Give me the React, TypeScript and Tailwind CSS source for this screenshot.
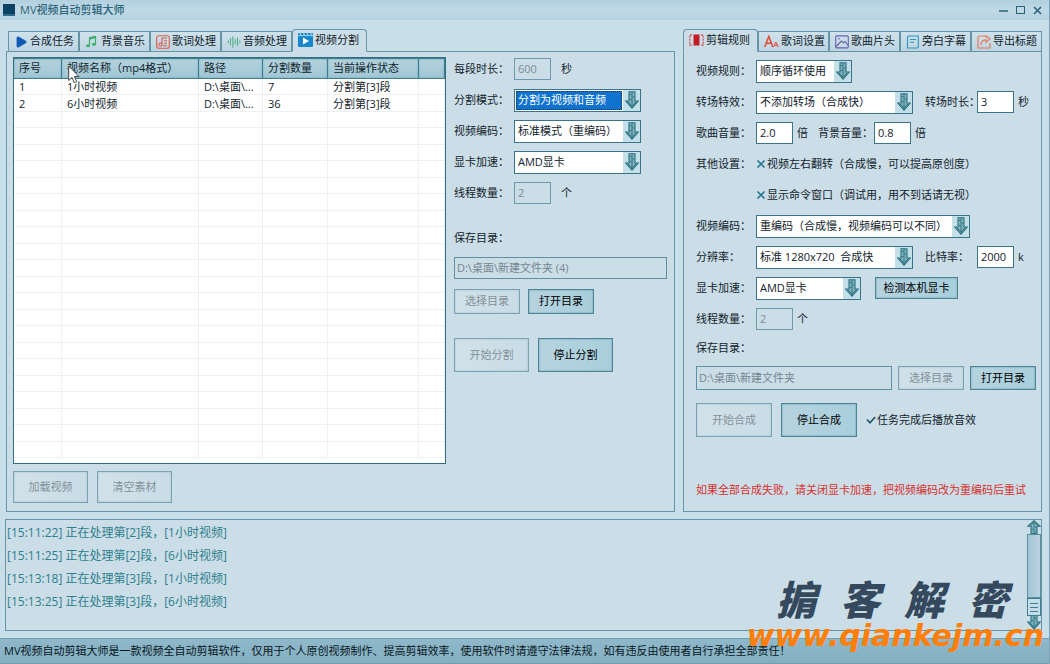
import React from 'react'
import { useState } from 'react'
import { AudioLines, Play } from 'lucide-react'
import clsx from 'clsx'


const tasks = [
    { id: 1, name: '1小时视频', path: 'D:\\桌面\\...', count: 7, status: '分割第[3]段' },
    { id: 2, name: '6小时视频', path: 'D:\\桌面\\...', count: 36, status: '分割第[3]段' },
]

const logs = [
    '[15:11:22] 正在处理第[2]段，[1小时视频]',
    '[15:11:25] 正在处理第[2]段，[6小时视频]',
    '[15:13:18] 正在处理第[3]段，[1小时视频]',
    '[15:13:25] 正在处理第[3]段，[6小时视频]',
]

const columns = ['序号', '视频名称（mp4格式）', '路径', '分割数量', '当前操作状态', '']

const ROWS = 23

/* ---------- icons ---------- */

const NoteIcon = () => (
    <svg viewBox="0 0 14 14" className="size-[14px] shrink-0">
        <path d="M4.500 10.500V2.800L10.500 1.500V9" fill="none" stroke="#3fae6b" strokeWidth="1.200" />
        <path d="M4.500 2.500L10.500 1V3.200L4.500 4.700z" fill="#3fae6b" />
        <ellipse cx="3" cy="10.800" rx="1.900" ry="1.500" fill="#3fae6b" />
        <ellipse cx="9" cy="9.300" rx="1.900" ry="1.500" fill="#3fae6b" />
    </svg>
)

const LyricIcon = () => (
    <svg viewBox="0 0 14 14" className="size-[14px] shrink-0" fill="none" stroke="#dd5b4a" strokeWidth="1.1">
        <rect x="0.7" y="0.7" width="12.6" height="12.6" rx="2" />
        <path d="M6 9.5V3h5M8.3 5.8h2.7M8 8.3h3M7 10.8h4" />
        <circle cx="4.4" cy="9.6" r="1.6" />
    </svg>
)

const VideoIcon = () => (
    <svg viewBox="0 0 15 14" className="h-[14px] w-[15px] shrink-0">
        <rect width="15" height="14" rx="1" fill="#1687cd" />
        <path d="M0 2.6h15" stroke="#c4e4f4" strokeWidth="0.8" />
        <path d="M2 0l1 2M5.500 0l1 2M9 0l1 2M12.500 0l1 2" stroke="#c4e4f4" strokeWidth="1" />
        <path d="M5 4.500v7l6-3.500z" fill="#fff" />
    </svg>
)

const RuleIcon = () => (
    <svg viewBox="0 0 15 12" className="h-3 w-[15px] shrink-0">
        <rect x="4.500" y="0.500" width="6" height="11" fill="#c11d28" />
        <path d="M3 1H0.800V11H3M12 1h2.200V11H12" fill="none" stroke="#d0555c" strokeWidth="1.300" strokeDasharray="2 1" />
    </svg>
)

const FontIcon = () => (
    <svg viewBox="0 0 15 13" className="h-[13px] w-[15px] shrink-0" fill="none" stroke="#df4a37">
        <path d="M0.800 12L4.800 1.300L8.800 12M2.300 8.300h5" strokeWidth="1.500" />
        <path d="M9.500 12L11.800 7L14.300 12M10.500 10.300h2.600" strokeWidth="1" />
    </svg>
)

const PictureIcon = () => (
    <svg viewBox="0 0 14 14" className="size-[14px] shrink-0" fill="none" stroke="#6a62ae" strokeWidth="1.100">
        <rect x="0.700" y="0.900" width="12.600" height="12" rx="1" />
        <path d="M1 11.500L6.500 6L8.500 7.800L10.200 6.500L13 10.500" />
        <path d="M3 3.800h2" />
    </svg>
)

const SubtitleIcon = () => (
    <svg viewBox="0 0 14 14" className="size-[14px] shrink-0" fill="none" stroke="#2f95bd" strokeWidth="1.100">
        <path d="M2.500 1H12.300V11.500A1.500 1.500 0 0 1 10.800 13H1.500V2A1 1 0 0 1 2.500 1z" />
        <path d="M4 4.500h6M4 7.200h4" />
    </svg>
)

const ExportIcon = () => (
    <svg viewBox="0 0 14 14" className="size-[14px] shrink-0" fill="none" stroke="#e8795a" strokeWidth="1.200">
        <path d="M8 1H2.500A1.500 1.500 0 0 0 1 2.500V13H13V8" />
        <path d="M4 10C4 6.500 6 4.800 9 4.800V7.300L13 3.800L9 0.800V3" />
    </svg>
)

const ArrowIcon = ({ up = false }: { up?: boolean }) => (
    <svg viewBox="0 0 14 18" className={clsx('w-[14px]', up ? 'h-[14px] rotate-180' : 'h-[18px]')} preserveAspectRatio="none">
        <path d="M4 0.700H10V10H13.200L7 17.200L0.800 10H4z" fill="#7fb2bd" stroke="#2d7180" strokeWidth="1.100" />
        <path d="M7 1V16M4.500 3.500h2M7.500 6h2M4.500 8.500h2M3 11l4 4 4-4" fill="none" stroke="#2d7180" strokeWidth="0.900" />
    </svg>
)

/* ---------- controls ---------- */

type TabItem = { label: string; icon: React.ReactNode }

const Tabs = ({ items, initial }: { items: TabItem[]; initial: number }) => {
    const [current, setCurrent] = useState(initial)
    return (
        <div role="tablist" className="relative z-10 -mb-px flex items-end">
            {items.map((item, i) => (
                <button
                    key={item.label}
                    role="tab"
                    aria-selected={i === current}
                    onClick={() => setCurrent(i)}
                    className={clsx(
                        'flex items-center gap-[2px] whitespace-nowrap border border-[#6795a8] pl-[5px]',
                        i === current
                            ? 'h-[23px] w-[75px] rounded-t-sm border-b-[#cbdde7] bg-[#cbdde7] pb-px'
                            : 'h-[21px] w-[71px] bg-linear-to-b from-[#cfe2ec] to-[#bdd5e1]'
                    )}
                >
                    {item.icon}
                    {item.label}
                </button>
            ))}
        </div>
    )
}

type SelectProps = { id: string; value: string; width: string; active?: boolean }

const Select = ({ id, value, width, active }: SelectProps) => (
    <div className={clsx('grid h-[23px] border border-[#39748a] bg-white', width)}>
        <select
            id={id}
            className={clsx(
                'col-start-1 row-start-1 appearance-none truncate outline-none',
                active ? 'my-px ml-px mr-[18px] border border-dotted border-[#1b3550] bg-[#0f72cf] pl-px text-white' : 'pl-[3px] pr-[17px]'
            )}
        >
            <option>{value}</option>
        </select>
        <span className="pointer-events-none col-start-1 row-start-1 flex w-[17px] items-center justify-center justify-self-end bg-[#c3dfe8]">
            <ArrowIcon />
        </span>
    </div>
)

const Field = ({ id, value, disabled }: { id: string; value: string; disabled?: boolean }) => (
    <input
        id={id}
        defaultValue={value}
        disabled={disabled}
        className="h-[22px] w-[37px] border border-[#39748a] bg-white pb-[2px] pl-[3px] outline-none disabled:border-[#6d9bad] disabled:bg-transparent disabled:text-[#7d8d96]"
    />
)

const Button = ({ children, disabled, className }: { children: React.ReactNode; disabled?: boolean; className: string }) => (
    <button
        disabled={disabled}
        className={clsx(
            'shrink-0 whitespace-nowrap border border-[#4d8496] bg-linear-to-r from-[#b5d3df] to-[#a9cfdc] text-black shadow-[inset_0_0_2px_#5d96a8]',
            'disabled:border-[#7ba3b4] disabled:from-[#d0e1e9] disabled:to-[#cadce6] disabled:text-[#83929b] disabled:shadow-[inset_0_0_2px_#9ab9c7]',
            className
        )}
    >
        {children}
    </button>
)

const Label = ({ htmlFor, children }: { htmlFor: string; children: React.ReactNode }) => (
    <label htmlFor={htmlFor} className="w-[60px] shrink-0 whitespace-nowrap">{children}</label>
)

const Row = ({ children }: { children: React.ReactNode }) => (
    <div className="flex h-[22px] items-center">{children}</div>
)

const Check = ({ label, on }: { label: string; on?: boolean }) => {
    const [checked, setChecked] = useState(!!on)
    return (
        <label className="flex items-center gap-px whitespace-nowrap">
            <span className="grid size-[10px]">
                <input
                    type="checkbox"
                    checked={checked}
                    onChange={() => setChecked(!checked)}
                    className="col-start-1 row-start-1 size-[10px] appearance-none"
                />
                <svg viewBox="0 0 10 10" className="pointer-events-none col-start-1 row-start-1 size-[10px]" fill="none" strokeWidth="1.700">
                    {checked
                        ? <path d="M1 4.500L4 7.800L9.200 2" stroke="#24566a" />
                        : <path d="M1.500 1.500L8.500 8.500M8.500 1.500L1.500 8.500" stroke="#27798f" />}
                </svg>
            </span>
            {label}
        </label>
    )
}

/* ---------- sections ---------- */

const TaskTable: React.FC = (): React.ReactElement => {
    return (
        <div className="relative flex-1 overflow-hidden border border-[#2f6f80] bg-white">
            <table className="w-full table-fixed border-separate border-spacing-0 text-left">
                <colgroup>
                    <col className="w-[48px]" />
                    <col className="w-[137px]" />
                    <col className="w-[64px]" />
                    <col className="w-[65px]" />
                    <col className="w-[91px]" />
                    <col />
                </colgroup>
                <thead>
                    <tr className="h-[21px] bg-linear-to-b from-[#b4d2de] to-[#9fc6d3]">
                        {columns.map((title, i) => (
                            <th key={i} className="whitespace-nowrap border-y border-r border-[#3f7f91] p-0 pl-[5px] font-normal shadow-[inset_0_0_2px_#6fa3b3]">
                                {title}
                            </th>
                        ))}
                    </tr>
                </thead>
                <tbody className="[&_td]:overflow-hidden [&_td]:whitespace-nowrap [&_td]:border-b [&_td]:border-r [&_td]:border-[#edf1f3] [&_td]:p-0 [&_td]:pl-[5px] [&_td]:leading-[15px]">
                    {Array.from({ length: ROWS }, (_, i) => {
                        const row = tasks[i]
                        return (
                            <tr key={i} className="odd:h-4 even:h-[17px]">
                                <td>{row?.id}</td>
                                <td>{row?.name}</td>
                                <td>{row?.path}</td>
                                <td>{row?.count}</td>
                                <td>{row?.status}</td>
                                <td></td>
                            </tr>
                        )
                    })}
                </tbody>
            </table>
            {/* mouse pointer */}
            <svg viewBox="0 0 12 19" className="absolute left-[54px] top-[7px] h-[19px] w-3">
                <path d="M0.700 1V15.500L4 12.500L6.300 17.800L8.700 16.800L6.400 11.600H11z" fill="#fff" stroke="#333" strokeWidth="0.900" />
            </svg>
        </div>
    )
}

const SplitForm = () => (
    <div className="flex w-[213px] shrink-0 flex-col">
        <div className="flex flex-col gap-[9px] pt-px">
            <Row>
                <Label htmlFor="seg">每段时长：</Label>
                <Field id="seg" value="600" disabled />
                <span className="ml-[10px]">秒</span>
            </Row>
            <Row>
                <Label htmlFor="mode">分割模式：</Label>
                <Select id="mode" value="分割为视频和音频" width="w-[127px]" active />
            </Row>
            <Row>
                <Label htmlFor="codec">视频编码：</Label>
                <Select id="codec" value="标准模式（重编码）" width="w-[127px]" />
            </Row>
            <Row>
                <Label htmlFor="gpu">显卡加速：</Label>
                <Select id="gpu" value="AMD显卡" width="w-[127px]" />
            </Row>
            <Row>
                <Label htmlFor="threads">线程数量：</Label>
                <Field id="threads" value="2" disabled />
                <span className="ml-[10px]">个</span>
            </Row>
        </div>
        <label htmlFor="dir" className="mt-[26px] leading-4">保存目录：</label>
        <input
            id="dir"
            disabled
            defaultValue="D:\桌面\新建文件夹 (4)"
            className="mt-[11px] h-[22px] border border-[#5f91a5] pb-[2px] pl-[2px] text-[#74868f]"
        />
        <div className="mt-[10px] flex gap-2">
            <Button disabled className="h-[25px] w-[66px]">选择目录</Button>
            <Button className="h-[25px] w-[66px]">打开目录</Button>
        </div>
        <div className="mt-6 flex gap-[9px]">
            <Button disabled className="h-[34px] w-[75px]">开始分割</Button>
            <Button className="h-[34px] w-[75px]">停止分割</Button>
        </div>
    </div>
)

const RuleForm = () => (
    <div className="flex flex-1 flex-col border border-[#6795a8] bg-[#cbdde7] pb-[13px] pl-3 pr-[5px] pt-2">
        <div className="flex flex-col gap-[9px]">
            <Row>
                <Label htmlFor="rule">视频规则：</Label>
                <Select id="rule" value="顺序循环使用" width="w-[96px]" />
            </Row>
            <Row>
                <Label htmlFor="trans">转场特效：</Label>
                <Select id="trans" value="不添加转场（合成快）" width="w-[157px]" />
                <label htmlFor="transTime" className="ml-3 w-[52px] whitespace-nowrap">转场时长：</label>
                <Field id="transTime" value="3" />
                <span className="ml-1">秒</span>
            </Row>
            <Row>
                <Label htmlFor="songVol">歌曲音量：</Label>
                <Field id="songVol" value="2.0" />
                <span className="ml-1">倍</span>
                <label htmlFor="bgVol" className="ml-[10px] w-[56px] whitespace-nowrap">背景音量：</label>
                <Field id="bgVol" value="0.8" />
                <span className="ml-1">倍</span>
            </Row>
            <Row>
                <span className="w-[60px]">其他设置：</span>
                <Check label="视频左右翻转（合成慢，可以提高原创度）" />
            </Row>
            <Row>
                <span className="w-[60px]"></span>
                <Check label="显示命令窗口（调试用，用不到话请无视）" />
            </Row>
            <Row>
                <Label htmlFor="codec2">视频编码：</Label>
                <Select id="codec2" value="重编码（合成慢，视频编码可以不同）" width="w-[214px]" />
            </Row>
            <Row>
                <Label htmlFor="res">分辨率：</Label>
                <Select id="res" value={'标准 1280x720 \u00a0合成快'} width="w-[157px]" />
                <label htmlFor="rate" className="ml-3 w-[52px] whitespace-nowrap">比特率：</label>
                <Field id="rate" value="2000" />
                <span className="ml-1">k</span>
            </Row>
            <Row>
                <Label htmlFor="gpu2">显卡加速：</Label>
                <Select id="gpu2" value="AMD显卡" width="w-[105px]" />
                <Button className="ml-[14px] h-[22px] w-[83px]">检测本机显卡</Button>
            </Row>
            <Row>
                <Label htmlFor="threads2">线程数量：</Label>
                <Field id="threads2" value="2" disabled />
                <span className="ml-1">个</span>
            </Row>
        </div>
        <label htmlFor="dir2" className="mt-[10px] leading-4">保存目录：</label>
        <div className="mt-[10px] flex gap-[6px]">
            <input
                id="dir2"
                disabled
                defaultValue="D:\桌面\新建文件夹"
                className="h-6 min-w-0 flex-1 border border-[#5f91a5] pb-[2px] pl-[2px] text-[#74868f]"
            />
            <Button disabled className="h-6 w-[66px]">选择目录</Button>
            <Button className="h-6 w-[66px]">打开目录</Button>
        </div>
        <div className="mt-[13px] flex items-center">
            <Button disabled className="h-[34px] w-[76px]">开始合成</Button>
            <Button className="ml-[9px] mr-[9px] h-[34px] w-[76px]">停止合成</Button>
            <Check label="任务完成后播放音效" on />
        </div>
        <p className="mt-auto whitespace-nowrap leading-4 text-[#d8302e]">
            如果全部合成失败，请关闭显卡加速，把视频编码改为重编码后重试
        </p>
    </div>
)

const LogPanel = () => (
    <section className="ml-[5px] mr-[7px] flex h-28 justify-between border border-[#6795a8] bg-[#cbdde7]">
        <ul className="pl-px pt-px text-xs text-[#2d7f8d]">
            {logs.map((line) => (
                <li key={line} className="h-[23px] whitespace-nowrap leading-[23px]">{line}</li>
            ))}
        </ul>
        <div className="flex w-[14px] flex-col items-center">
            <ArrowIcon up />
            <span className="w-full flex-1 border border-[#5b90a1] bg-linear-to-r from-[#a3c6d5] to-[#bcd3e1]"></span>
            <span className="flex h-[18px] w-full flex-col items-center justify-center gap-[3px] border border-[#3f7f91] bg-[#c3dce7]">
                <i className="h-px w-2 bg-[#3f7f91]"></i>
                <i className="h-px w-2 bg-[#3f7f91]"></i>
                <i className="h-px w-2 bg-[#3f7f91]"></i>
            </span>
            <span className="flex h-[14px] items-end overflow-hidden"><ArrowIcon /></span>
        </div>
    </section>
)

const App: React.FC = (): React.ReactElement => {
    return (
        <div className="relative flex min-h-screen flex-col overflow-hidden border-r border-[#7ba3b5] bg-[#c8dfe9] font-['Open_Sans','Noto_Sans_CJK_SC',sans-serif] text-[11px] text-[#12232c]">
            <header className="flex h-5 items-center bg-linear-to-b from-[#b3d0df] via-[#bfd9e6] to-[#b6d1df] pl-[3px] pr-[7px] text-[#2c6477]">
                <span className="mr-[5px] h-3 w-3 border-b-2 border-[#2d6b88] bg-[#0c4263]"></span>
                <h1 className="flex-1 font-medium">MV视频自动剪辑大师</h1>
                <div className="flex items-center gap-2">
                    <button aria-label="最小化" className="flex size-[9px] items-center">
                        <svg viewBox="0 0 9 9" className="size-[9px]"><path d="M0 5h9" stroke="#2a6378" strokeWidth="1.500" /></svg>
                    </button>
                    <button aria-label="最大化" className="h-2 w-[9px] border border-[#2a6378]"></button>
                    <button aria-label="关闭" className="size-[9px]">
                        <svg viewBox="0 0 9 9" className="size-[9px]"><path d="M1 1L8 8M8 1L1 8" stroke="#2a6378" strokeWidth="1.600" /></svg>
                    </button>
                </div>
            </header>

            <main className="flex flex-1 gap-2 pb-[7px] pl-[6px] pr-[7px] pt-[9px]">
                <section className="flex min-w-0 flex-1 flex-col">
                    <div className="pl-[2px]">
                        <Tabs
                            initial={4}
                            items={[
                                { label: '合成任务', icon: <Play className="size-[14px] shrink-0" color="#1058b0" fill="#1058b0" strokeWidth={1} /> },
                                { label: '背景音乐', icon: <NoteIcon /> },
                                { label: '歌词处理', icon: <LyricIcon /> },
                                { label: '音频处理', icon: <AudioLines className="size-[14px] shrink-0" color="#58b08c" /> },
                                { label: '视频分割', icon: <VideoIcon /> },
                            ]}
                        />
                    </div>
                    <div className="flex flex-1 gap-2 border border-[#6795a8] bg-[#cbdde7] pb-2 pl-[6px] pr-[7px] pt-[5px]">
                        <div className="flex min-w-0 flex-1 flex-col">
                            <TaskTable />
                            <div className="mt-[7px] flex gap-[9px]">
                                <Button disabled className="h-8 w-[75px]">加载视频</Button>
                                <Button disabled className="h-8 w-[75px]">清空素材</Button>
                            </div>
                        </div>
                        <SplitForm />
                    </div>
                </section>

                <section className="flex w-[359px] shrink-0 flex-col">
                    <Tabs
                        initial={0}
                        items={[
                            { label: '剪辑规则', icon: <RuleIcon /> },
                            { label: '歌词设置', icon: <FontIcon /> },
                            { label: '歌曲片头', icon: <PictureIcon /> },
                            { label: '旁白字幕', icon: <SubtitleIcon /> },
                            { label: '导出标题', icon: <ExportIcon /> },
                        ]}
                    />
                    <RuleForm />
                </section>
            </main>

            <LogPanel />

            <footer className="mt-[7px] flex h-[26px] items-center border-y border-[#6f9fb2] bg-linear-to-b from-[#8fb9ca] to-[#84afc1] pl-1 text-[#08161e]">
                <p className="whitespace-nowrap">
                    MV视频自动剪辑大师是一款视频全自动剪辑软件，仅用于个人原创视频制作、提高剪辑效率，使用软件时请遵守法律法规，如有违反由使用者自行承担全部责任！
                </p>
            </footer>

            {/* watermark */}
            <div className="pointer-events-none absolute bottom-3 right-[5px] flex flex-col items-end italic">
                <div className="flex gap-6 pr-9 font-['Noto_Sans_CJK_SC',sans-serif] text-[40px] font-black leading-[44px] text-[#34495e]">
                    <span>掮</span><span>客</span><span>解</span><span>密</span>
                </div>
                <div className="font-['DejaVu_Sans',sans-serif] text-[30px] font-bold leading-8 text-[#ff7f0a]">www.qiankejm.cn</div>
            </div>
        </div>
    )
}

export default App
